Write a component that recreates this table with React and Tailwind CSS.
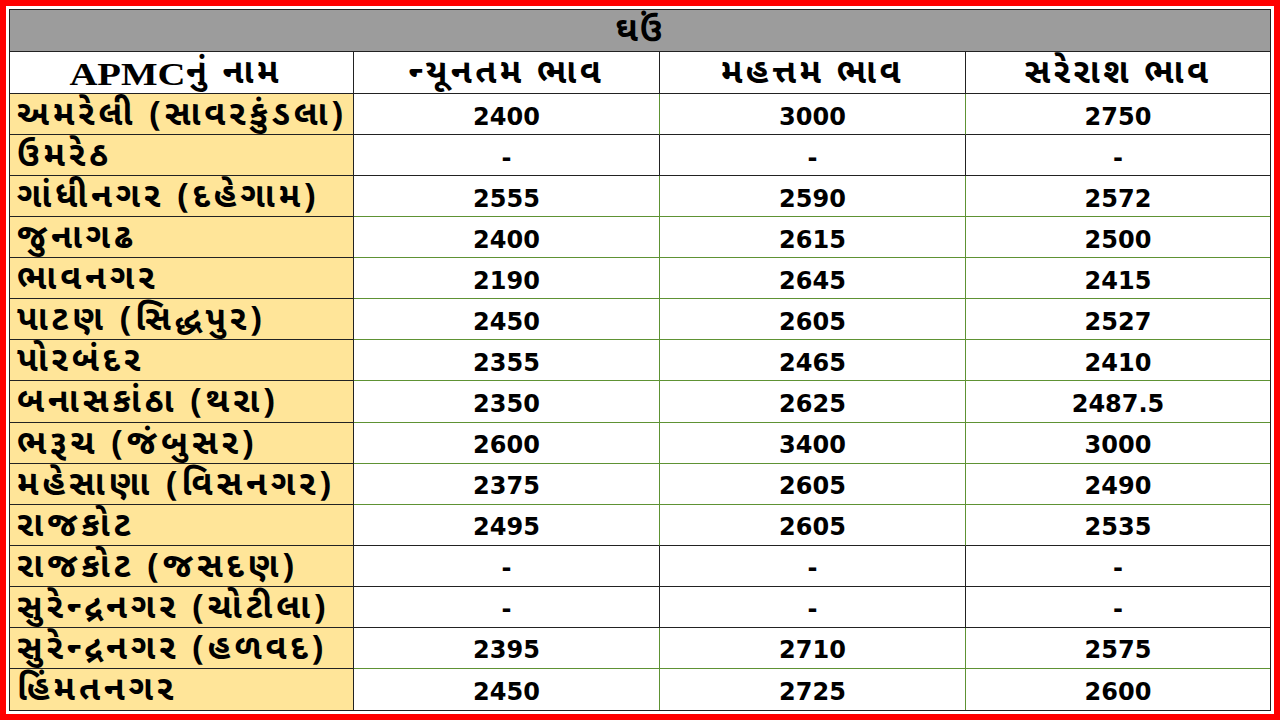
const rows = [
  ['અમરેલી (સાવરકુંડલા)', '2400', '3000', '2750'],
  ['ઉમરેઠ', '-', '-', '-'],
  ['ગાંધીનગર (દહેગામ)', '2555', '2590', '2572'],
  ['જુનાગઢ', '2400', '2615', '2500'],
  ['ભાવનગર', '2190', '2645', '2415'],
  ['પાટણ (સિદ્ધપુર)', '2450', '2605', '2527'],
  ['પોરબંદર', '2355', '2465', '2410'],
  ['બનાસકાંઠા (થરા)', '2350', '2625', '2487.5'],
  ['ભરૂચ (જંબુસર)', '2600', '3400', '3000'],
  ['મહેસાણા (વિસનગર)', '2375', '2605', '2490'],
  ['રાજકોટ', '2495', '2605', '2535'],
  ['રાજકોટ (જસદણ)', '-', '-', '-'],
  ['સુરેન્દ્રનગર (ચોટીલા)', '-', '-', '-'],
  ['સુરેન્દ્રનગર (હળવદ)', '2395', '2710', '2575'],
  ['હિંમતનગર', '2450', '2725', '2600'],
];

const guj = "font-['Noto_Sans_Gujarati','Lohit_Gujarati','Noto_Sans','DejaVu_Sans',sans-serif]";
const num = "font-['DejaVu_Sans',Verdana,sans-serif]";

export default function App() {
  return (
    <div className="w-[1280px] h-[720px] bg-[#ff0000] p-[6px]">
      <div className="w-full h-full bg-white p-[3px]">
        <div className="w-full h-full flex flex-col border border-[#222]">
          <div className={`h-[42px] shrink-0 bg-[#9c9c9c] border-b border-[#222] flex items-center justify-center pt-[4px] text-[34px] leading-none font-bold text-black tracking-[2px] ${guj}`}>
            ઘઉં
          </div>
          <div className="h-[42px] shrink-0 grid grid-cols-[344px_306px_306px_1fr] border-b border-[#222] bg-white">
            <div className="border-r border-[#222] flex items-center justify-center pt-[4px] leading-none font-bold text-black">
              <span className="inline-block font-['Liberation_Serif',serif] text-[31px] scale-x-[1.25] mr-[12px]">APMC</span>
              <span className={`${guj} text-[34px] tracking-[3.5px]`}>નું નામ</span>
            </div>
            <div className={`border-r border-[#222] flex items-center justify-center pt-[4px] text-[34px] leading-none tracking-[3.5px] font-bold text-black ${guj}`}>ન્યૂનતમ ભાવ</div>
            <div className={`border-r border-[#222] flex items-center justify-center pt-[4px] text-[34px] leading-none tracking-[3.5px] font-bold text-black ${guj}`}>મહત્તમ ભાવ</div>
            <div className={`flex items-center justify-center pt-[4px] text-[34px] leading-none tracking-[3.5px] font-bold text-black ${guj}`}>સરેરાશ ભાવ</div>
          </div>
          {rows.map((r, i) => {
            const dash = r[1] === '-';
            const nextDash = i < rows.length - 1 && rows[i + 1][1] === '-';
            const last = i === rows.length - 1;
            const line = dash ? 'border-[#222]' : 'border-[#5e9234]';
            const bottom = last ? 'border-b-0' : dash || nextDash ? 'border-b border-b-[#222]' : 'border-b border-b-[#5e9234]';
            return (
              <div key={i} className="flex-1 min-h-0 grid grid-cols-[344px_306px_306px_1fr]">
                <div className={`bg-[#ffe599] border-r border-[#222] ${last ? '' : 'border-b border-b-[#222]'} flex items-center pl-[7px] pt-[6px] text-[34px] leading-none tracking-[4px] font-bold text-black whitespace-nowrap ${guj}`}>
                  {r[0]}
                </div>
                {r.slice(1).map((v, j) => (
                  <div key={j} className={`${j < 2 ? `border-r ${line}` : ''} ${bottom} flex items-center justify-center pt-[5px] leading-none text-[24px] font-bold text-black ${num}`}>
                    {v}
                  </div>
                ))}
              </div>
            );
          })}
        </div>
      </div>
    </div>
  );
}
